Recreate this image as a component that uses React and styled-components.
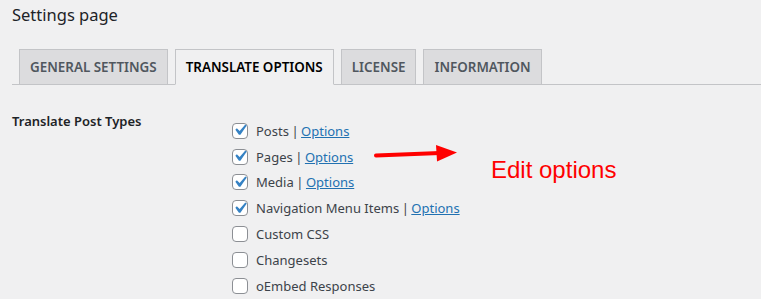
import React from "react";
import styled, { createGlobalStyle } from "styled-components";

const Global = createGlobalStyle`
  html, body { margin: 0; padding: 0; background: #f0f0f1; }
  body {
    font-family: "Noto Sans", "Open Sans", sans-serif;
    color: #3c434a;
    font-size: 13px;
  }
`;

const Page = styled.div`
  position: relative;
  width: 761px;
  height: 299px;
  overflow: hidden;
  padding-left: 12px;
  box-sizing: border-box;
`;

const Title = styled.h2`
  margin: 0;
  padding-top: 4px;
  font-size: 16.5px;
  font-weight: 400;
  line-height: 22px;
  color: #1d2327;
`;

const TabBar = styled.nav`
  display: flex;
  margin-top: 23px;
  border-bottom: 1px solid #c3c4c7;
`;

const Tab = styled.a`
  display: block;
  margin-left: 7px;
  margin-bottom: -1px;
  padding: 5px 10px;
  border: 1px solid #c3c4c7;
  border-bottom: 1px solid ${(p) => (p.$active ? "#f0f0f1" : "#c3c4c7")};
  background: ${(p) => (p.$active ? "#f0f0f1" : "#dcdcde")};
  color: ${(p) => (p.$active ? "#000" : "#50575e")};
  font-size: 13.4px;
  line-height: 24px;
  font-weight: 600;
  text-decoration: none;
  white-space: nowrap;
`;

const FormRow = styled.div`
  display: grid;
  grid-template-columns: 220px 1fr;
  margin-top: 23px;
`;

const Label = styled.div`
  font-size: 13px;
  font-weight: 600;
  color: #1d2327;
  line-height: 20px;
  padding-top: 3px;
`;

const List = styled.div`
  display: flex;
  flex-direction: column;
  padding-top: 10px;
`;

const Item = styled.label`
  display: flex;
  align-items: center;
  height: 25.8px;
  font-size: 13px;
  color: #3c434a;
  white-space: nowrap;
`;

const Box = styled.span`
  box-sizing: border-box;
  width: 16px;
  height: 16px;
  margin-right: 8px;
  border: 1px solid #8c8f94;
  border-radius: 4px;
  background: #fff;
  display: flex;
  align-items: center;
  justify-content: center;
  flex: none;
  svg { width: 22px; height: 22px; margin-top: -1px; flex: none; }
`;

const Sep = styled.span`
  margin: 0 2.5px;
`;

const Link = styled.a`
  color: #2271b1;
  text-decoration: underline;
`;

const Note = styled.div`
  position: absolute;
  left: 491px;
  top: 155px;
  font-family: "Liberation Sans", Arial, sans-serif;
  font-size: 24px;
  color: #ff0000;
  line-height: 30px;
`;

const ArrowSvg = styled.svg`
  position: absolute;
  left: 370px;
  top: 140px;
`;

const Check = () => (
  <svg viewBox="0 0 20 20">
    <path fill="#3582c4" d="M14.83 4.89l1.34.94-5.81 8.38H9.02L5.78 9.67l1.34-1.25 2.57 2.4z" />
  </svg>
);

const items = [
  { name: "Posts", checked: true, options: true },
  { name: "Pages", checked: true, options: true },
  { name: "Media", checked: true, options: true },
  { name: "Navigation Menu Items", checked: true, options: true },
  { name: "Custom CSS" },
  { name: "Changesets" },
  { name: "oEmbed Responses" },
];

export default function App() {
  return (
    <Page>
      <Global />
      <Title>Settings page</Title>
      <TabBar>
        <Tab>GENERAL SETTINGS</Tab>
        <Tab $active>TRANSLATE OPTIONS</Tab>
        <Tab>LICENSE</Tab>
        <Tab>INFORMATION</Tab>
      </TabBar>
      <FormRow>
        <Label>Translate Post Types</Label>
        <List>
          {items.map((it) => (
            <Item key={it.name}>
              <Box>{it.checked && <Check />}</Box>
              {it.name}
              {it.options && (
                <>
                  <Sep>|</Sep>
                  <Link>Options</Link>
                </>
              )}
            </Item>
          ))}
        </List>
      </FormRow>
      <ArrowSvg width="95" height="30" viewBox="0 0 95 30">
        <line x1="6" y1="15.5" x2="70" y2="13" stroke="#ff0000" strokeWidth="4" strokeLinecap="round" />
        <polygon points="66,5 87,12.5 67,21.5" fill="#ff0000" />
      </ArrowSvg>
      <Note>Edit options</Note>
    </Page>
  );
}
